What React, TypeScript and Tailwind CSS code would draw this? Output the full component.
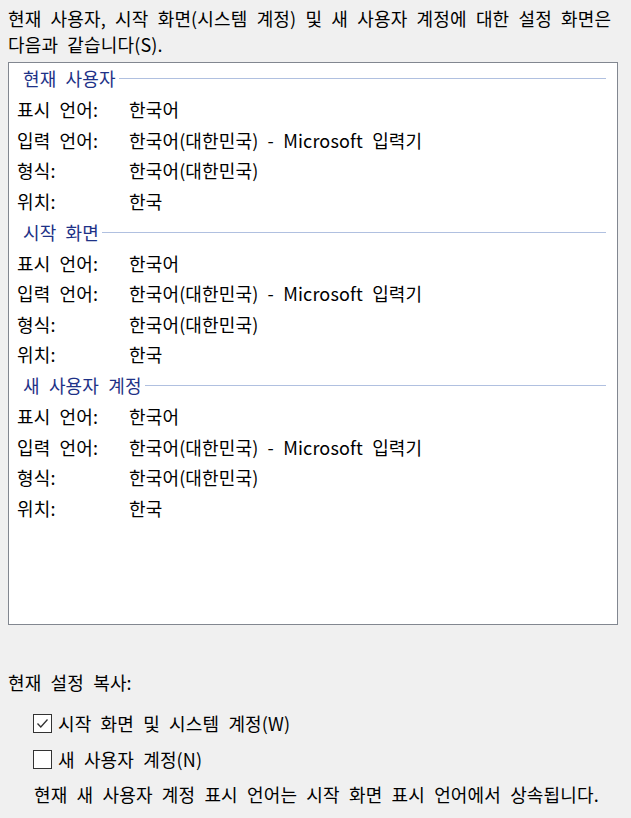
const sections = [
  { title: "현재 사용자" },
  { title: "시작 화면" },
  { title: "새 사용자 계정" },
];

const rows = [
  { label: "표시 언어:", value: "한국어" },
  { label: "입력 언어:", value: "한국어(대한민국) - Microsoft 입력기" },
  { label: "형식:", value: "한국어(대한민국)" },
  { label: "위치:", value: "한국" },
];

function Checkbox({ checked }: { checked: boolean }) {
  return (
    <span className="flex h-[19px] w-[19px] shrink-0 items-center justify-center border border-[#333333] bg-white">
      {checked ? (
        <svg width="15" height="15" viewBox="0 0 15 15" fill="none">
          <path d="M2.5 7.5 L5.8 11 L12.5 3.5" stroke="#333333" strokeWidth="1.3" />
        </svg>
      ) : null}
    </span>
  );
}

export default function App() {
  return (
    <div
      className="h-[818px] w-[631px] overflow-hidden bg-[#f0f0f0] text-[18px] tracking-[0.15px] text-black [word-spacing:5px]"
      style={{ fontFamily: '"Noto Sans CJK KR", "Noto Sans", sans-serif' }}
    >
      <p className="px-2 pt-[5px] leading-[26px]">
        현재 사용자, 시작 화면(시스템 계정) 및 새 사용자 계정에 대한 설정 화면은
        다음과 같습니다(S).
      </p>

      <div className="mx-2 mt-[5px] h-[563px] w-[610px] border border-[#828790] bg-white">
        {sections.map((s) => (
          <div key={s.title}>
            <div className="flex h-[31.5px] items-center pl-[14px] pr-[11px]">
              <span className="text-[#1e3287]">{s.title}</span>
              <span className="ml-[3px] h-px flex-1 bg-[#b0c0e0]" />
            </div>
            {rows.map((r) => (
              <div key={r.label} className="flex h-[30.5px] items-center pl-2">
                <span className="w-[112px]">{r.label}</span>
                <span>{r.value}</span>
              </div>
            ))}
          </div>
        ))}
      </div>

      <div className="mt-[44px] px-2 leading-[26px]">현재 설정 복사:</div>
      <div className="mt-[15px] flex items-center gap-[6px] pl-[33px]">
        <Checkbox checked />
        <span>시작 화면 및 시스템 계정(W)</span>
      </div>
      <div className="mt-[9px] flex items-center gap-[6px] pl-[33px]">
        <Checkbox checked={false} />
        <span>새 사용자 계정(N)</span>
      </div>
      <div className="mt-[8px] pl-[34px] leading-[26px]">
        현재 새 사용자 계정 표시 언어는 시작 화면 표시 언어에서 상속됩니다.
      </div>
    </div>
  );
}
